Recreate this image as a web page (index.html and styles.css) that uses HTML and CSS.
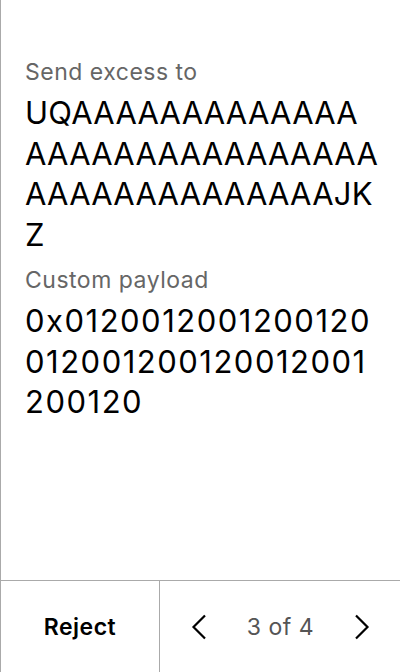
FILE: index.html
```html
<!DOCTYPE html>
<html>
<head>
<meta charset="utf-8">
<link rel="stylesheet" href="styles.css">
</head>
<body>
<div class="screen">
  <main class="content">
    <div class="field">
      <div class="label">Send excess to</div>
      <div class="value value-address"><span class="line">UQAAAAAAAAAAAAA</span><span class="line">AAAAAAAAAAAAAAAA</span><span class="line">AAAAAAAAAAAAAAJK</span><span class="line">Z</span></div>
    </div>
    <div class="field">
      <div class="label">Custom payload</div>
      <div class="value value-hex"><span class="line">0x0120012001200120</span><span class="line">012001200120012001</span><span class="line">200120</span></div>
    </div>
  </main>
  <footer class="footer">
    <div class="reject">Reject</div>
    <div class="pager">
      <svg class="chev" width="16" height="26" viewBox="0 0 16 26"><path d="M14 1.5 L2.5 13 L14 24.5" fill="none" stroke="#000" stroke-width="2.2"/></svg>
      <span class="count">3 of 4</span>
      <svg class="chev" width="16" height="26" viewBox="0 0 16 26"><path d="M2 1.5 L13.5 13 L2 24.5" fill="none" stroke="#000" stroke-width="2.2"/></svg>
    </div>
  </footer>
</div>
</body>
</html>
```
FILE: styles.css
```css
* { box-sizing: border-box; }
html, body { margin: 0; padding: 0; background: #fff; }
body { font-family: Inter, "Noto Sans", sans-serif; color: #000; }
.screen {
  width: 400px;
  height: 672px;
  border-left: 1px solid #aaa;
  display: flex;
  flex-direction: column;
}
.content {
  flex: 1;
  padding: 59px 8px 0 24px;
  display: flex;
  flex-direction: column;
  gap: 12px;
}
.label {
  font-size: 23px;
  line-height: 27px;
  letter-spacing: 0.5px;
  color: #666;
  margin-bottom: 7px;
}
.value {
  font-size: 31px;
  line-height: 40.5px;
  color: #000;
}
.value-address { letter-spacing: 0.25px; }
.value-hex { letter-spacing: 1.5px; }
.line {
  display: block;
  white-space: nowrap;
}
.footer {
  height: 92px;
  border-top: 1px solid #aaa;
  display: flex;
}
.reject {
  width: 159px;
  border-right: 1px solid #aaa;
  display: flex;
  align-items: center;
  justify-content: center;
  font-size: 23px;
  font-weight: 600;
  letter-spacing: 0.5px;
  padding-top: 1px;
}
.pager {
  flex: 1;
  display: flex;
  align-items: center;
  justify-content: space-between;
  padding: 0 30px 0 31px;
}
.count {
  font-size: 23px;
  letter-spacing: 0.5px;
  color: #555;
}
.chev { display: block; }
```
